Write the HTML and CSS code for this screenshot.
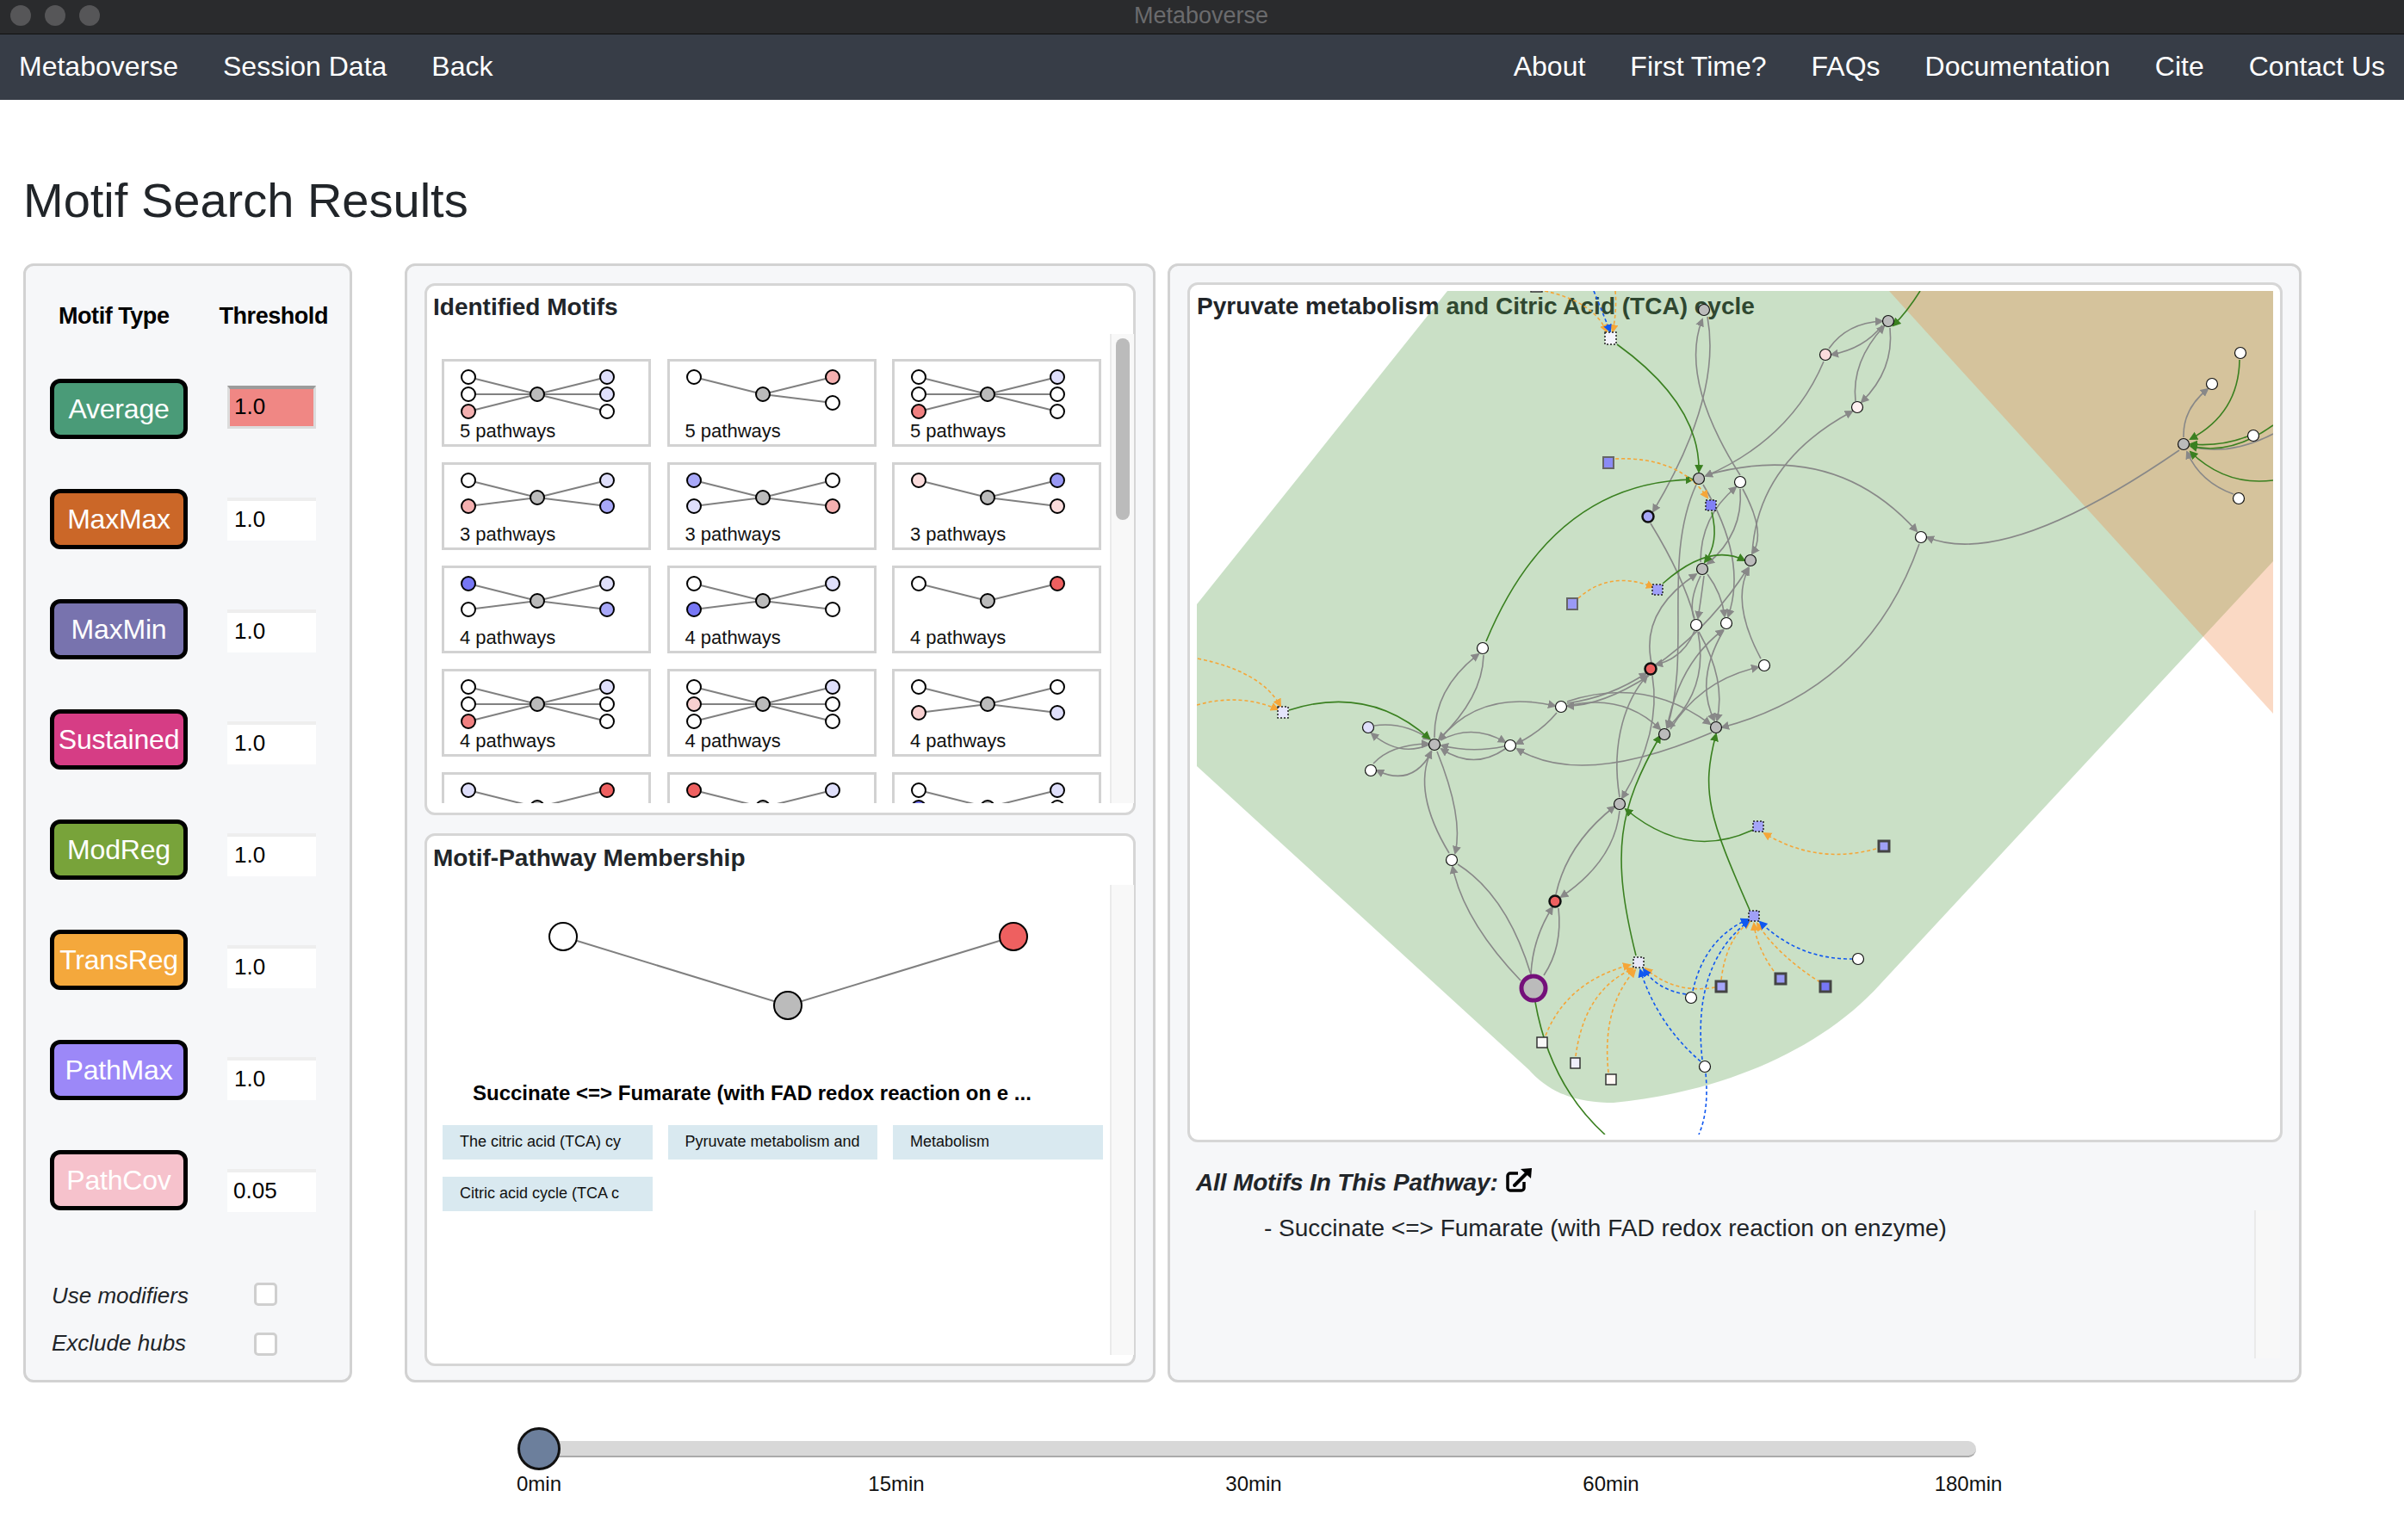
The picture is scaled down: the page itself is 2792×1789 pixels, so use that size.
FILE: index.html
```html
<!DOCTYPE html>
<html lang="en">
<head>
<meta charset="utf-8">
<title>Metaboverse</title>
<link rel="stylesheet" href="styles.css">
</head>
<body>
<header class="titlebar">
  <div class="lights"><span class="light"></span><span class="light"></span><span class="light"></span></div>
  <span class="window-title">Metaboverse</span>
</header>
<nav class="navbar">
  <a>Metaboverse</a><a>Session Data</a><a>Back</a>
  <span class="nav-spacer"></span>
  <a>About</a><a>First Time?</a><a>FAQs</a><a>Documentation</a><a>Cite</a><a>Contact Us</a>
</nav>
<h1 class="page-title">Motif Search Results</h1>
<main class="panels">
  <section class="panel panel-left">
    <div class="col-heads"><span>Motif Type</span><span>Threshold</span></div>
    <div class="controls">
      <div class="btn-col">
        <button class="motif-btn average">Average</button>
        <button class="motif-btn maxmax">MaxMax</button>
        <button class="motif-btn maxmin">MaxMin</button>
        <button class="motif-btn sustained">Sustained</button>
        <button class="motif-btn modreg">ModReg</button>
        <button class="motif-btn transreg">TransReg</button>
        <button class="motif-btn pathmax">PathMax</button>
        <button class="motif-btn pathcov">PathCov</button>
      </div>
      <div class="input-col">
        <input class="thresh active" value="1.0">
        <input class="thresh" value="1.0">
        <input class="thresh" value="1.0">
        <input class="thresh" value="1.0">
        <input class="thresh" value="1.0">
        <input class="thresh" value="1.0">
        <input class="thresh" value="1.0">
        <input class="thresh" value="0.05">
      </div>
    </div>
    <label class="check first"><span>Use modifiers</span><input type="checkbox"></label>
    <label class="check second"><span>Exclude hubs</span><input type="checkbox"></label>
  </section>

  <section class="panel panel-mid">
    <div class="card motifs-card">
      <h2 class="card-title">Identified Motifs</h2>
      <div class="scroll-row motifs-row">
        <div class="motif-grid">
          <div class="motif"><svg class="mini" viewBox="0 0 237 68"><path class="e" d="M28 18 108 38M28 38H108M28 58 108 38M189 18 108 38M189 38H108M189 58 108 38"/><circle class="n w" cx="28" cy="18" r="8"/><circle class="n w" cx="28" cy="38" r="8"/><circle class="n p2" cx="28" cy="58" r="8"/><circle class="n g" cx="108" cy="38" r="8"/><circle class="n b1" cx="189" cy="18" r="8"/><circle class="n b1" cx="189" cy="38" r="8"/><circle class="n w" cx="189" cy="58" r="8"/></svg><span>5 pathways</span></div>
          <div class="motif"><svg class="mini" viewBox="0 0 237 68"><path class="e" d="M28 18 108 38M189 18 108 38M189 48 108 38"/><circle class="n w" cx="28" cy="18" r="8"/><circle class="n g" cx="108" cy="38" r="8"/><circle class="n p2" cx="189" cy="18" r="8"/><circle class="n w" cx="189" cy="48" r="8"/></svg><span>5 pathways</span></div>
          <div class="motif"><svg class="mini" viewBox="0 0 237 68"><path class="e" d="M28 18 108 38M28 38H108M28 58 108 38M189 18 108 38M189 38H108M189 58 108 38"/><circle class="n w" cx="28" cy="18" r="8"/><circle class="n w" cx="28" cy="38" r="8"/><circle class="n p3" cx="28" cy="58" r="8"/><circle class="n g" cx="108" cy="38" r="8"/><circle class="n b1" cx="189" cy="18" r="8"/><circle class="n w" cx="189" cy="38" r="8"/><circle class="n w" cx="189" cy="58" r="8"/></svg><span>5 pathways</span></div>

          <div class="motif"><svg class="mini" viewBox="0 0 237 68"><path class="e" d="M28 18 108 38M28 48 108 38M189 18 108 38M189 48 108 38"/><circle class="n w" cx="28" cy="18" r="8"/><circle class="n p2" cx="28" cy="48" r="8"/><circle class="n g" cx="108" cy="38" r="8"/><circle class="n b1" cx="189" cy="18" r="8"/><circle class="n b2" cx="189" cy="48" r="8"/></svg><span>3 pathways</span></div>
          <div class="motif"><svg class="mini" viewBox="0 0 237 68"><path class="e" d="M28 18 108 38M28 48 108 38M189 18 108 38M189 48 108 38"/><circle class="n b2" cx="28" cy="18" r="8"/><circle class="n b1" cx="28" cy="48" r="8"/><circle class="n g" cx="108" cy="38" r="8"/><circle class="n w" cx="189" cy="18" r="8"/><circle class="n p2" cx="189" cy="48" r="8"/></svg><span>3 pathways</span></div>
          <div class="motif"><svg class="mini" viewBox="0 0 237 68"><path class="e" d="M28 18 108 38M189 18 108 38M189 48 108 38"/><circle class="n p1" cx="28" cy="18" r="8"/><circle class="n g" cx="108" cy="38" r="8"/><circle class="n b3" cx="189" cy="18" r="8"/><circle class="n p1" cx="189" cy="48" r="8"/></svg><span>3 pathways</span></div>

          <div class="motif"><svg class="mini" viewBox="0 0 237 68"><path class="e" d="M28 18 108 38M28 48 108 38M189 18 108 38M189 48 108 38"/><circle class="n b4" cx="28" cy="18" r="8"/><circle class="n w" cx="28" cy="48" r="8"/><circle class="n g" cx="108" cy="38" r="8"/><circle class="n b1" cx="189" cy="18" r="8"/><circle class="n b2" cx="189" cy="48" r="8"/></svg><span>4 pathways</span></div>
          <div class="motif"><svg class="mini" viewBox="0 0 237 68"><path class="e" d="M28 18 108 38M28 48 108 38M189 18 108 38M189 48 108 38"/><circle class="n w" cx="28" cy="18" r="8"/><circle class="n b4" cx="28" cy="48" r="8"/><circle class="n g" cx="108" cy="38" r="8"/><circle class="n b1" cx="189" cy="18" r="8"/><circle class="n w" cx="189" cy="48" r="8"/></svg><span>4 pathways</span></div>
          <div class="motif"><svg class="mini" viewBox="0 0 237 68"><path class="e" d="M28 18 108 38M189 18 108 38"/><circle class="n w" cx="28" cy="18" r="8"/><circle class="n g" cx="108" cy="38" r="8"/><circle class="n r" cx="189" cy="18" r="8"/></svg><span>4 pathways</span></div>

          <div class="motif"><svg class="mini" viewBox="0 0 237 68"><path class="e" d="M28 18 108 38M28 38H108M28 58 108 38M189 18 108 38M189 38H108M189 58 108 38"/><circle class="n w" cx="28" cy="18" r="8"/><circle class="n w" cx="28" cy="38" r="8"/><circle class="n p3" cx="28" cy="58" r="8"/><circle class="n g" cx="108" cy="38" r="8"/><circle class="n b1" cx="189" cy="18" r="8"/><circle class="n w" cx="189" cy="38" r="8"/><circle class="n w" cx="189" cy="58" r="8"/></svg><span>4 pathways</span></div>
          <div class="motif"><svg class="mini" viewBox="0 0 237 68"><path class="e" d="M28 18 108 38M28 38H108M28 58 108 38M189 18 108 38M189 38H108M189 58 108 38"/><circle class="n w" cx="28" cy="18" r="8"/><circle class="n p1b" cx="28" cy="38" r="8"/><circle class="n w" cx="28" cy="58" r="8"/><circle class="n g" cx="108" cy="38" r="8"/><circle class="n b1" cx="189" cy="18" r="8"/><circle class="n w" cx="189" cy="38" r="8"/><circle class="n w" cx="189" cy="58" r="8"/></svg><span>4 pathways</span></div>
          <div class="motif"><svg class="mini" viewBox="0 0 237 68"><path class="e" d="M28 18 108 38M28 48 108 38M189 18 108 38M189 48 108 38"/><circle class="n w" cx="28" cy="18" r="8"/><circle class="n p1b" cx="28" cy="48" r="8"/><circle class="n g" cx="108" cy="38" r="8"/><circle class="n w" cx="189" cy="18" r="8"/><circle class="n b1" cx="189" cy="48" r="8"/></svg><span>4 pathways</span></div>

          <div class="motif"><svg class="mini" viewBox="0 0 237 68"><path class="e" d="M28 18 108 38M189 18 108 38"/><circle class="n b1" cx="28" cy="18" r="8"/><circle class="n g" cx="108" cy="38" r="8"/><circle class="n r" cx="189" cy="18" r="8"/></svg></div>
          <div class="motif"><svg class="mini" viewBox="0 0 237 68"><path class="e" d="M28 18 108 38M189 18 108 38"/><circle class="n r" cx="28" cy="18" r="8"/><circle class="n g" cx="108" cy="38" r="8"/><circle class="n b1" cx="189" cy="18" r="8"/></svg></div>
          <div class="motif"><svg class="mini" viewBox="0 0 237 68"><path class="e" d="M28 18 108 38M28 38H108M189 18 108 38M189 38H108"/><circle class="n w" cx="28" cy="18" r="8"/><circle class="n b4" cx="28" cy="38" r="8"/><circle class="n g" cx="108" cy="38" r="8"/><circle class="n b1" cx="189" cy="18" r="8"/><circle class="n w" cx="189" cy="38" r="8"/></svg></div>
        </div>
        <div class="track"><div class="thumb"></div></div>
      </div>
    </div>
    <div class="card member-card">
      <h2 class="card-title">Motif-Pathway Membership</h2>
      <div class="scroll-row member-row">
        <div class="member-body">
          <svg class="big-motif" viewBox="0 0 790 150">
            <path class="e" d="M158 38 419 118 681 38"/>
            <circle class="n w" cx="158" cy="38" r="16"/>
            <circle class="n g" cx="419" cy="118" r="16"/>
            <circle class="n r" cx="681" cy="38" r="16"/>
          </svg>
          <p class="reaction">Succinate &lt;=&gt; Fumarate (with FAD redox reaction on e ...</p>
          <div class="chips">
            <span class="chip">The citric acid (TCA) cy</span>
            <span class="chip">Pyruvate metabolism and</span>
            <span class="chip">Metabolism</span>
            <span class="chip">Citric acid cycle (TCA c</span>
          </div>
        </div>
        <div class="track"></div>
      </div>
    </div>
  </section>

  <section class="panel panel-right">
    <div class="card network-card">
      <h2 class="card-title network-title">Pyruvate metabolism and Citric Acid (TCA) cycle</h2>
      <svg class="network" viewBox="1390 338 1250 980">
        <defs>
          <marker id="ad" markerWidth="11" markerHeight="11" refX="8" refY="5" orient="auto" markerUnits="userSpaceOnUse"><path d="M0 0 10 5 0 10z" class="md"/></marker>
          <marker id="ao" markerWidth="11" markerHeight="11" refX="8" refY="5" orient="auto" markerUnits="userSpaceOnUse"><path d="M0 0 10 5 0 10z" class="mo"/></marker>
          <marker id="ab" markerWidth="11" markerHeight="11" refX="8" refY="5" orient="auto" markerUnits="userSpaceOnUse"><path d="M0 0 10 5 0 10z" class="mb"/></marker>
          <marker id="am" markerWidth="11" markerHeight="11" refX="8" refY="5" orient="auto" markerUnits="userSpaceOnUse"><path d="M0 0 10 5 0 10z" class="mg"/></marker>
        </defs>
        <path class="hull-green" d="M1681 338H2640V652L2184 1143C2110 1225 1990 1270 1874 1281 1840 1281 1805 1275 1776 1243L1390 890V702Z"/>
        <path class="hull-orange" d="M2194 338H2640V829Z"/>

        <g class="edges gray">
          <path d="M2021 552Q1950 440 1977 371"/>
          <path d="M1983 368Q2000 460 1920 594"/>
          <path d="M2024 568Q2052 620 2035 643"/>
          <path d="M2021 568Q2025 620 1983 655"/>
          <path d="M2118 420Q2080 510 1981 553"/>
          <path d="M1981 552Q2130 510 2226 617"/>
          <path class="plain" d="M1917 608Q1955 670 1968 718"/>
          <path d="M1975 653Q1975 600 2016 566"/>
          <path d="M1970 563C1930 650 1965 760 1936 845"/>
          <path d="M1978 563Q2030 650 2007 716"/>
          <path class="plain" d="M1975 669Q1960 700 1968 720"/>
          <path d="M1979 669Q1975 700 1972 718"/>
          <path d="M1983 667Q2000 690 2003 716"/>
          <path d="M1918 770Q1905 710 1970 667"/>
          <path d="M1968 733Q1955 765 1923 772"/>
          <path d="M1923 773Q1985 730 2030 660"/>
          <path d="M2045 765Q2010 700 2031 660"/>
          <path d="M1936 846Q1950 770 2001 732"/>
          <path d="M1972 734Q1985 800 1937 845"/>
          <path d="M2002 732Q1968 790 1991 837"/>
          <path d="M1973 734Q2005 790 1994 837"/>
          <path d="M1940 847Q1975 790 2042 775"/>
          <path d="M1820 817Q1870 810 1912 782"/>
          <path d="M1915 785Q1860 820 1820 820"/>
          <path d="M1820 815Q1910 785 1986 841"/>
          <path d="M1820 820Q1885 805 1928 847"/>
          <path d="M1919 785Q1930 850 1884 927"/>
          <path d="M1881 926C1870 860 1890 810 1913 785"/>
          <path d="M1666 857Q1665 800 1717 760"/>
          <path d="M1723 761Q1722 810 1671 859"/>
          <path d="M1672 859Q1720 800 1806 820"/>
          <path d="M1808 828Q1790 850 1761 864"/>
          <path d="M1673 860Q1710 840 1748 862"/>
          <path d="M1747 867Q1710 875 1674 866"/>
          <path d="M1748 870Q1712 895 1674 870"/>
          <path d="M1596 843Q1630 838 1661 859"/>
          <path d="M1660 865Q1625 880 1593 852"/>
          <path d="M1595 887Q1615 865 1659 864"/>
          <path d="M1663 873Q1640 915 1599 895"/>
          <path d="M2229 632Q2170 800 2000 845"/>
          <path d="M2124 405Q2145 375 2186 373"/>
          <path d="M2186 378Q2165 405 2127 412"/>
          <path d="M2155 466Q2150 420 2188 379"/>
          <path d="M2195 381Q2200 430 2162 467"/>
          <path d="M2035 643Q2041 537 2151 478"/>
          <path d="M2531 523Q2329 662 2238 624"/>
          <path d="M2536 508Q2535 475 2564 452"/>
          <path class="plain" d="M2640 504Q2590 530 2544 519"/>
          <path d="M2594 574Q2555 560 2540 525"/>
          <path d="M1988 851Q1837 916 1762 870"/>
          <path d="M1807 1039Q1820 980 1875 937"/>
          <path d="M1881 942Q1875 1000 1813 1042"/>
          <path d="M1778 1132Q1780 1090 1803 1054"/>
          <path class="plain" d="M1810 1055Q1815 1100 1793 1133"/>
          <path d="M1766 1139Q1700 1070 1687 1007"/>
          <path class="plain" d="M1778 1132Q1750 1040 1693 1004"/>
          <path d="M1683 991Q1640 920 1662 873"/>
          <path d="M1669 873Q1700 950 1690 991"/>
        </g>

        <g class="edges green">
          <path d="M1878 400Q1975 470 1973 548"/>
          <path d="M1726 745Q1803 560 1966 557"/>
          <path d="M1988 595Q1997 630 1980 653"/>
          <path d="M1931 678Q1985 630 2026 651"/>
          <path d="M2230 338Q2215 362 2199 378"/>
          <path d="M2601 418Q2600 480 2544 510"/>
          <path d="M2610 507Q2580 519 2544 516"/>
          <path d="M2640 494Q2590 530 2544 518"/>
          <path d="M2640 558Q2585 565 2544 525"/>
          <path d="M1497 825Q1590 795 1660 858"/>
          <path d="M1900 1110C1870 990 1880 940 1928 855"/>
          <path d="M2032 1057C1985 950 1975 920 1993 853"/>
          <path d="M2036 964Q1960 1000 1888 940"/>
          <path class="plain" d="M1783 1164Q1800 1260 1864 1318"/>
        </g>

        <g class="edges orange">
          <path d="M1876 533Q1950 530 1983 578"/>
          <path d="M1833 695Q1870 662 1920 682"/>
          <path d="M1391 765Q1465 780 1487 820"/>
          <path d="M1390 819Q1440 805 1484 824"/>
          <path d="M1794 338Q1850 350 1866 385"/>
          <path d="M1876 338Q1878 360 1873 385"/>
          <path d="M2179 986Q2110 1005 2049 968"/>
          <path d="M1795 1203Q1820 1140 1893 1121"/>
          <path d="M1830 1227Q1840 1150 1897 1125"/>
          <path d="M1868 1246Q1860 1170 1899 1127"/>
          <path d="M1992 1147Q1945 1155 1911 1125"/>
          <path d="M1999 1138Q2005 1090 2032 1071"/>
          <path d="M2060 1128Q2040 1100 2037 1073"/>
          <path d="M2114 1141Q2065 1110 2041 1073"/>
        </g>

        <g class="edges blue">
          <path d="M1851 338Q1860 360 1870 385"/>
          <path d="M1958 1155Q1925 1150 1909 1126"/>
          <path d="M1975 1233Q1925 1190 1905 1127"/>
          <path d="M1977 1231Q1965 1120 2031 1070"/>
          <path d="M1966 1151Q1980 1090 2030 1068"/>
          <path d="M2152 1114Q2090 1115 2044 1071"/>
          <path class="plain" d="M1981 1247Q1985 1290 1973 1318"/>
        </g>

        <g class="nodes">
          <circle class="w" cx="2021" cy="560" r="6.5"/><circle class="w" cx="1970" cy="726" r="6.5"/><circle class="w" cx="2005" cy="724" r="6.5"/><circle class="w" cx="1722" cy="753" r="6.5"/><circle class="w" cx="2049" cy="773" r="6.5"/><circle class="w" cx="1813" cy="821" r="6.5"/><circle class="w" cx="1754" cy="866" r="6.5"/><circle class="w" cx="2231" cy="624" r="6.5"/><circle class="w" cx="2602" cy="410" r="6.5"/><circle class="w" cx="2569" cy="446" r="6.5"/><circle class="w" cx="2617" cy="506" r="6.5"/><circle class="w" cx="2600" cy="579" r="6.5"/><circle class="w" cx="1592" cy="895" r="6.5"/><circle class="w" cx="1686" cy="999" r="6.5"/><circle class="w" cx="2158" cy="1114" r="6.5"/><circle class="w" cx="1964" cy="1159" r="6.5"/><circle class="w" cx="1980" cy="1239" r="6.5"/>
          <circle class="g" cx="1979" cy="360" r="6.5"/><circle class="g" cx="1973" cy="556" r="6.5"/><circle class="g" cx="2033" cy="651" r="6.5"/><circle class="g" cx="1977" cy="661" r="6.5"/><circle class="g" cx="1666" cy="865" r="6.5"/><circle class="g" cx="1933" cy="853" r="6.5"/><circle class="g" cx="1993" cy="845" r="6.5"/><circle class="g" cx="2193" cy="373" r="6.5"/><circle class="g" cx="2536" cy="516" r="6.5"/><circle class="g" cx="1881" cy="934" r="6.5"/>
          <circle class="b1" cx="1589" cy="845" r="6.5"/><circle class="p1" cx="2120" cy="412" r="6.5"/><circle class="pw" cx="2157" cy="473" r="6.5"/>
          <circle class="b2 bold" cx="1914" cy="600" r="6.5"/><circle class="r bold" cx="1917" cy="777" r="6.5"/><circle class="r bold" cx="1806" cy="1047" r="6.5"/>
          <circle class="g hub" cx="1781" cy="1148" r="14"/>
          <rect class="sq" x="1778" y="331" width="13" height="8" fill="#f4f4fb"/>
          <rect class="sq-dot" x="1864" y="386" width="13" height="14" fill="#f4f4fb"/>
          <rect class="sq-soft" x="1862" y="531" width="12" height="13" fill="#8b8bf5"/>
          <rect class="sq-dot" x="1981" y="581" width="12" height="12" fill="#8080f5"/>
          <rect class="sq-dot" x="1919" y="679" width="12" height="12" fill="#a0a0f8"/>
          <rect class="sq-soft" x="1820" y="695" width="12" height="13" fill="#9a9af5"/>
          <rect class="sq-dot" x="1484" y="821" width="12" height="13" fill="#e4e4fb"/>
          <rect class="sq-dot" x="2036" y="954" width="12" height="12" fill="#a5a5f8"/>
          <rect class="sq-bold" x="2182" y="977" width="12" height="12" fill="#a0a0f8"/>
          <rect class="sq-dot" x="2031" y="1058" width="12" height="12" fill="#a0a0f8"/>
          <rect class="sq-dot" x="1897" y="1112" width="12" height="12" fill="#e8e8f8"/>
          <rect class="sq-bold" x="1993" y="1140" width="12" height="12" fill="#a5a5f8"/>
          <rect class="sq-bold" x="2062" y="1131" width="12" height="12" fill="#9999f5"/>
          <rect class="sq-bold" x="2114" y="1140" width="12" height="12" fill="#7777f5"/>
          <rect class="sq" x="1785" y="1205" width="12" height="12" fill="#f8f8f8"/>
          <rect class="sq" x="1824" y="1229" width="11" height="12" fill="#eeeefa"/>
          <rect class="sq" x="1865" y="1248" width="12" height="12" fill="#fff8f4"/>
        </g>
      </svg>
    </div>
    <h3 class="all-motifs">All Motifs In This Pathway:
      <svg class="ext-icon" viewBox="0 0 32 30"><path class="ext-box" d="M15 6H6a3 3 0 0 0-3 3v14a3 3 0 0 0 3 3h13a3 3 0 0 0 3-3V16"/><path class="ext-shaft" d="M11 20 25 6"/><path class="ext-head" d="M18 1 31 0 30 12Z"/></svg>
    </h3>
    <div class="scroll-row pathway-row">
      <p class="pathway-item">- Succinate &lt;=&gt; Fumarate (with FAD redox reaction on enzyme)</p>
      <div class="track pathway-track"></div>
    </div>
  </section>
</main>
<div class="slider">
  <div class="slider-track"></div>
  <div class="slider-thumb"></div>
</div>
<div class="slider-labels"><span>0min</span><span>15min</span><span>30min</span><span>60min</span><span>180min</span></div>
</body>
</html>
```
FILE: styles.css
```css
* { box-sizing: border-box; }
html, body { margin: 0; padding: 0; }
body { background: #fff; color: #212529; font-family: "Liberation Sans", Arial, sans-serif; width: 2792px; height: 1789px; overflow: hidden; }

.titlebar { height: 40px; background: #2a2b2d; border-bottom: 1px solid #111; display: flex; align-items: center; justify-content: center; position: relative; }
.lights { position: absolute; left: 12px; top: 6px; display: flex; gap: 16px; }
.light { width: 24px; height: 24px; border-radius: 50%; background: #565658; }
.window-title { color: #6b6b6d; font-size: 27px; margin-top: -2px; margin-left: -2px; }

.navbar { height: 76px; background: #373d47; display: flex; align-items: center; padding: 0 22px 3px; gap: 52px; }
.navbar a { color: #fff; font-size: 32px; line-height: 40px; }
.nav-spacer { flex: 1; }

.page-title { margin: 0; font-size: 56px; font-weight: 400; line-height: 66px; height: 190px; padding: 84px 0 0 27px; }

.panels { display: flex; padding-left: 27px; height: 1300px; }
.panel { background: #f6f7f9; border: 3px solid #d2d2d2; border-radius: 12px; height: 1300px; }
.panel-left { width: 382px; padding: 38px 0 0 28px; }
.panel-mid { width: 872px; margin-left: 61px; padding: 20px 20px 0; }
.panel-right { width: 1317px; margin-left: 14px; padding: 19px 19px 0 20px; }

.col-heads { display: flex; font-size: 27px; font-weight: 700; line-height: 40px; color: #000; padding-left: 10px; gap: 58px; letter-spacing: -0.45px; }
.controls { display: flex; margin-top: 53px; gap: 46px; }
.btn-col { display: flex; flex-direction: column; gap: 58px; }
.motif-btn { width: 160px; height: 70px; border: 5px solid #000; border-radius: 12px; font-family: inherit; font-size: 32px; color: #fff; padding: 0; letter-spacing: -0.2px; }
.average { background: #4a9b78; }
.maxmax { background: #cb6728; }
.maxmin { background: #7873ae; }
.sustained { background: #d63d85; }
.modreg { background: #78a33a; }
.transreg { background: #f4a83c; }
.pathmax { background: #9c88f8; }
.pathcov { background: #f6c2cc; }
.input-col { display: flex; flex-direction: column; gap: 80px; margin-top: 8px; }
.thresh { width: 103px; height: 50px; border: 0; border-top: 4px solid #eee; background: #fff; font-family: inherit; font-size: 26px; color: #000; padding: 0 0 3px 8px; border-radius: 0; outline: 0; }
.thresh:last-child { padding-left: 7px; }
.thresh.active { background: #f08784; border: 3px solid #dcdcdc; border-top: 4px solid #9c9c9c; padding-left: 5px; }
.check { display: flex; align-items: center; height: 27px; font-style: italic; font-size: 26px; padding-left: 2px; margin-top: 31px; }
.check.first { margin-top: 82px; }
.check.first span { padding-top: 3px; }
.check.second span { padding-bottom: 2px; }
.check span { width: 235px; }
.check input { appearance: none; width: 27px; height: 27px; margin: 0; background: #fff; border: 3px solid #cfcfcf; border-radius: 5px; }

.card { background: #fff; border: 3px solid #d6d6d6; border-radius: 12px; }
.card-title { margin: 0; font-size: 28px; font-weight: 700; padding: 1px 0 0 7px; line-height: 48px; color: #212529; height: 48px; }
.scroll-row { display: flex; }
.track { width: 28px; background: #f8f8f8; border-left: 2px solid #eaeaea; flex: none; }
.thumb { width: 16px; height: 211px; margin: 5px 0 0 5px; background: #bbb; border-radius: 8px; }

.motifs-card { height: 618px; }
.motifs-row { height: 545px; margin-top: 8px; }
.motif-grid { width: 793px; height: 545px; overflow: hidden; padding: 29px 0 0 17px; display: grid; grid-template-columns: repeat(3, 243px); grid-auto-rows: 102px; column-gap: 18.5px; row-gap: 18px; flex: none; }
.motif { border: 3px solid #d2d2d2; background: #fff; font-size: 22px; line-height: 26px; color: #111; }
.motif span { display: block; padding-left: 18px; }
.mini { display: block; width: 237px; height: 68px; }
.e { stroke: #808080; stroke-width: 2; fill: none; }
.n { stroke: #000; stroke-width: 2; }
.w { fill: #fff; }
.g { fill: #bbb; }
.r { fill: #ee6060; }
.p1 { fill: #fbdcdc; }
.p1b { fill: #f8d0d0; }
.p2 { fill: #f4b0b0; }
.p3 { fill: #f08080; }
.pw { fill: #fff0f0; }
.b1 { fill: #dfdffb; }
.b2 { fill: #a8a8f8; }
.b3 { fill: #9999f5; }
.b4 { fill: #7777f5; }

.member-card { height: 619px; margin-top: 21px; }
.member-card .card-title { line-height: 50px; height: 50px; }
.member-row { height: 546px; margin-top: 7px; }
.member-body { width: 793px; flex: none; padding-top: 22px; }
.big-motif { display: block; width: 790px; height: 150px; }
.reaction { margin: 55px 0 0 53px; font-size: 24px; font-weight: 700; line-height: 30px; color: #000; }
.chips { display: grid; grid-template-columns: repeat(3, 243.5px); grid-auto-rows: 40px; column-gap: 18px; row-gap: 20px; padding-left: 18px; margin-top: 22px; }
.chip { background: #d9e9f0; font-size: 18px; color: #111; padding-left: 20px; line-height: 38px; }

.network-card { height: 999px; position: relative; padding: 7px 8px; }
.network-title { position: absolute; left: 8px; top: 1px; padding: 0; }
.network { display: block; position: relative; width: 1250px; height: 980px; }
.hull-green { fill: rgba(81, 151, 65, .3); }
.hull-orange { fill: rgba(238, 128, 58, .3); }
.edges path { fill: none; }
.gray path { stroke: #888; stroke-width: 1.6; marker-end: url(#am); }
.green path { stroke: #3a8020; stroke-width: 1.6; marker-end: url(#ad); }
.orange path { stroke: #f5a638; stroke-width: 1.6; stroke-dasharray: 4 3; marker-end: url(#ao); }
.blue path { stroke: #1058f0; stroke-width: 1.6; stroke-dasharray: 4 3; marker-end: url(#ab); }
.edges path.plain { marker-end: none; }
.mg { fill: #888; }
.md { fill: #3a8020; }
.mo { fill: #f5a638; }
.mb { fill: #1058f0; }
.nodes circle { stroke: #111; stroke-width: 1.2; }
.nodes circle.bold { stroke-width: 2.5; }
.nodes circle.hub { stroke: #74107a; stroke-width: 5; }
.sq { stroke: #333; stroke-width: 1.5; }
.sq-soft { stroke: #666; stroke-width: 2; }
.sq-bold { stroke: #444; stroke-width: 3; }
.sq-dot { stroke: #222; stroke-width: 1.5; stroke-dasharray: 2 2; }

.all-motifs { margin: 27px 0 0 10px; font-size: 28px; font-style: italic; font-weight: 700; line-height: 40px; display: flex; align-items: center; gap: 8px; letter-spacing: -0.15px; }
.ext-icon { width: 32px; height: 30px; flex: none; margin-top: -4px; }
.ext-box { fill: none; stroke: #000; stroke-width: 3.5; }
.ext-shaft { fill: none; stroke: #000; stroke-width: 4; stroke-linecap: round; }
.ext-head { fill: #000; }
.pathway-row { height: 172px; margin-top: 12px; justify-content: space-between; }
.pathway-item { margin: 1px 0 0 89px; font-size: 28px; line-height: 40px; }
.pathway-track { width: 30px; margin-right: 3px; }

.slider { position: relative; margin: 52px 0 0 601px; width: 1694px; height: 50px; }
.slider-track { margin: 16px 0 0 25px; height: 19px; background: #d8d8d8; border-bottom: 2px solid #aaa; border-radius: 0 10px 10px 0; position: absolute; left: 0; right: 0; }
.slider-thumb { position: absolute; left: 0; top: 0; width: 50px; height: 50px; border-radius: 50%; background: #6c7f9c; border: 3px solid #111; }
.slider-labels { display: flex; gap: 315px; margin: 1px 0 0 576px; font-size: 24px; line-height: 30px; color: #111; }
.slider-labels span { width: 100px; text-align: center; }
```
